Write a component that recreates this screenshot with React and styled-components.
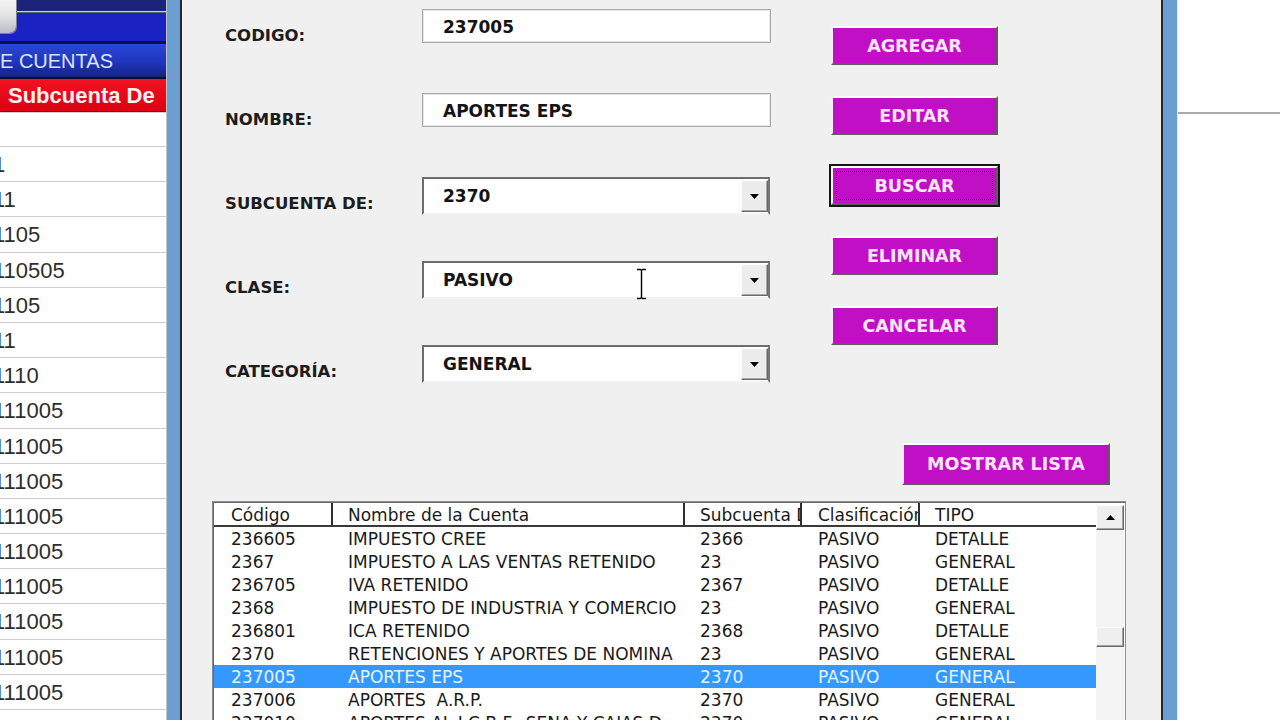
import React from "react";
import styled, { createGlobalStyle, css } from "styled-components";

const GlobalStyle = createGlobalStyle`
  html, body { margin: 0; padding: 0; background: #f0f0f0; overflow: hidden; }
  #root { width: 1280px; height: 720px; }
`;

const Screen = styled.div`
  display: flex;
  width: 1280px;
  height: 720px;
  overflow: hidden;
  font-family: "DejaVu Sans", "Liberation Sans", sans-serif;
`;

/* ---------- left (background window) ---------- */
const LeftPanel = styled.div`
  width: 166px;
  flex: none;
  display: flex;
  flex-direction: column;
  background: #fff;
  border-right: 1px solid #c4c4c4;
  overflow: hidden;
  font-family: "Liberation Sans", Arial, sans-serif;
`;

const TopBars = styled.div`
  position: relative;
  flex: none;
  display: flex;
  flex-direction: column;
`;

const Band = styled.div`
  height: ${(p) => p.$h}px;
  background: ${(p) => p.$bg};
  flex: none;
`;

const CornerKnob = styled.div`
  position: absolute;
  left: -12px;
  top: -6px;
  width: 28px;
  height: 39px;
  border-radius: 0 0 7px 0;
  background: linear-gradient(180deg, #fafafa 0%, #e4e4e4 55%, #b9bcc4 100%);
  box-shadow: 1px 1px 0 #7a7f9a;
`;

const TitleBand = styled.div`
  height: 33px;
  flex: none;
  background: linear-gradient(180deg, #2b46d8 0%, #1f35be 55%, #142381 100%);
  color: #dde4f6;
  font-size: 20px;
  line-height: 35px;
  white-space: nowrap;
`;

const RedBand = styled.div`
  height: 33px;
  flex: none;
  box-sizing: border-box;
  background: linear-gradient(180deg, #f21222 0%, #dc0010 100%);
  border-bottom: 1px solid #9a0010;
  color: #fff2f2;
  font-weight: bold;
  font-size: 22px;
  line-height: 34px;
  padding-left: 8px;
  white-space: nowrap;
`;

const LeftList = styled.div`
  display: flex;
  flex-direction: column;
`;

const LeftRow = styled.div`
  height: ${(p) => (p.$first ? 34 : 35.2)}px;
  box-sizing: border-box;
  flex: none;
  border-bottom: 1px solid #cdcdcd;
  font-size: 22px;
  line-height: 36px;
  color: #2e2e2e;
  white-space: nowrap;
  overflow: hidden;
  text-indent: -7px;
`;

/* ---------- window frame edges ---------- */
const WindowEdge = styled.div`
  flex: none;
  background: #6b9fd1;
  ${(p) =>
    p.$side === "left"
      ? css`
          width: 13px;
          border-right: 2px solid #262626;
        `
      : css`
          width: 14px;
          border-left: 2px solid #262626;
          border-right: 1px solid #e2e9f1;
        `}
`;

/* ---------- form ---------- */
const FormArea = styled.div`
  width: 979px;
  flex: none;
  display: flex;
  flex-direction: column;
  background: #f0f0f0;
  overflow: hidden;
`;

const TopSection = styled.div`
  display: flex;
  height: 429px;
  flex: none;
`;

const FieldsColumn = styled.div`
  display: flex;
  flex-direction: column;
  padding: 9px 0 0 43px;
`;

const FieldRow = styled.div`
  display: grid;
  grid-template-columns: 197px 349px;
  height: 84px;
  align-items: start;
`;

const FieldLabel = styled.div`
  margin-top: 17px;
  line-height: 20px;
  font-weight: bold;
  font-size: 16.5px;
  color: #1c1c1c;
  white-space: nowrap;
`;

const TextBox = styled.div`
  height: 34px;
  box-sizing: border-box;
  border: 1px solid #a9a9a9;
  box-shadow: inset 0 0 0 1px #e6e6e6;
  background: #fff;
  padding: 2px 0 0 20px;
  display: flex;
  align-items: center;
  font-weight: bold;
  font-size: 17px;
  color: #141414;
`;

const ComboBox = styled.div`
  position: relative;
  width: 348px;
  height: 38px;
  box-sizing: border-box;
  border: 2px solid;
  border-color: #6d6d6d #777 #f2f2f2 #6d6d6d;
  background: #fff;
  display: flex;
`;

const ComboText = styled.div`
  flex: 1;
  padding-left: 19px;
  display: flex;
  align-items: center;
  font-weight: bold;
  font-size: 17px;
  color: #141414;
`;

const DropButton = styled.div`
  width: 27px;
  margin: 1px 0;
  box-sizing: border-box;
  background: #ececec;
  border: 1px solid;
  border-color: #fff #6a6a6a #6a6a6a #fff;
  box-shadow: inset -1px -1px 0 #a8a8a8;
  display: flex;
  align-items: center;
  justify-content: center;
`;

const Cursor = styled.svg`
  position: absolute;
  left: 212px;
  top: 5px;
`;

const ButtonsColumn = styled.div`
  margin-left: 60px;
  padding-top: 26px;
  display: flex;
  flex-direction: column;
  gap: 31px;
`;

const PurpleButton = styled.button`
  position: relative;
  width: ${(p) => p.$w || 167}px;
  height: ${(p) => p.$h || 39}px;
  box-sizing: border-box;
  margin: 0;
  padding: 0;
  background: #c10fc6;
  color: #fbe6fb;
  font-family: "DejaVu Sans", sans-serif;
  font-weight: bold;
  font-size: 17.5px;
  border: 2px solid;
  border-color: #fdfdfd #5c5c5c #5c5c5c #f1f1f1;
  display: flex;
  align-items: center;
  justify-content: center;
  cursor: default;
  ${(p) =>
    p.$focused &&
    css`
      box-shadow: 0 0 0 2px #151515;
      &::after {
        content: "";
        position: absolute;
        inset: 3px;
        border: 1px dotted #2a2a2a;
      }
    `}
`;

const ActionRow = styled.div`
  display: flex;
  justify-content: flex-end;
  padding-right: 51px;
  margin-top: 14px;
  flex: none;
`;

const ListView = styled.div`
  margin: 16px 35px 0 30px;
  height: 260px;
  flex: none;
  box-sizing: border-box;
  border: 1px solid #8c8c8c;
  box-shadow: inset 1px 1px 0 #6a6a6a;
  background: #fff;
  display: flex;
  padding: 1px 1px 0 1px;
`;

const Table = styled.div`
  flex: 1;
  display: flex;
  flex-direction: column;
  overflow: hidden;
`;

const columns = "119px 352px 117px 118px 1fr";
const pads = [17, 15, 15, 16, 15];

const HeaderRow = styled.div`
  display: grid;
  grid-template-columns: ${columns};
  height: 24px;
  flex: none;
  box-sizing: border-box;
  border-bottom: 2px solid #3a3a3a;
`;

const HeaderCell = styled.div`
  padding-left: ${(p) => p.$pad}px;
  border-right: ${(p) => (p.$last ? "none" : "2px solid #2e2e2e")};
  font-size: 17px;
  line-height: 25px;
  color: #1a1a1a;
  white-space: nowrap;
  overflow: hidden;
`;

const DataRow = styled.div`
  display: grid;
  grid-template-columns: ${columns};
  height: 23px;
  flex: none;
  background: ${(p) => (p.$selected ? "#3399ff" : "transparent")};
  color: ${(p) => (p.$selected ? "#e8f3ff" : "#1a1a1a")};
`;

const DataCell = styled.div`
  min-width: 0;
  padding-left: ${(p) => p.$pad}px;
  font-size: 17px;
  line-height: 24px;
  white-space: pre;
  overflow: hidden;
  text-overflow: clip;
`;

const Scrollbar = styled.div`
  width: 28px;
  flex: none;
  margin-top: 2px;
  display: flex;
  flex-direction: column;
  background: #f4f4f4;
`;

const ScrollPart = styled.div`
  height: ${(p) => p.$h}px;
  margin-top: ${(p) => p.$mt || 0}px;
  flex: none;
  box-sizing: border-box;
  background: #efefef;
  border: 1px solid;
  border-color: #fff #696969 #696969 #fff;
  box-shadow: inset -1px -1px 0 #a3a3a3;
  display: flex;
  align-items: center;
  justify-content: center;
`;

/* ---------- right (background window) ---------- */
const RightPanel = styled.div`
  flex: 1;
  background: #fff;
  display: flex;
  flex-direction: column;
`;

const RightTop = styled.div`
  height: 112px;
  flex: none;
  border-bottom: 2px solid #a9a9a9;
`;

const DownArrow = () => (
  <svg width="9" height="5" viewBox="0 0 9 5">
    <path d="M0 0H9L4.5 5Z" fill="#000" />
  </svg>
);

const UpArrow = () => (
  <svg width="9" height="5" viewBox="0 0 9 5">
    <path d="M0 5H9L4.5 0Z" fill="#000" />
  </svg>
);

const leftRows = [
  "",
  "1",
  "11",
  "1105",
  "110505",
  "1105",
  "11",
  "1110",
  "111005",
  "111005",
  "111005",
  "111005",
  "111005",
  "111005",
  "111005",
  "111005",
  "111005",
  "111005",
];

const fields = [
  { label: "CODIGO:", value: "237005", kind: "text" },
  { label: "NOMBRE:", value: "APORTES EPS", kind: "text" },
  { label: "SUBCUENTA DE:", value: "2370", kind: "combo" },
  { label: "CLASE:", value: "PASIVO", kind: "combo", cursor: true },
  { label: "CATEGORÍA:", value: "GENERAL", kind: "combo" },
];

const buttons = ["AGREGAR", "EDITAR", "BUSCAR", "ELIMINAR", "CANCELAR"];

const headers = ["Código", "Nombre de la Cuenta", "Subcuenta De", "Clasificación", "TIPO"];

const rows = [
  ["236605", "IMPUESTO CREE", "2366", "PASIVO", "DETALLE"],
  ["2367", "IMPUESTO A LAS VENTAS RETENIDO", "23", "PASIVO", "GENERAL"],
  ["236705", "IVA RETENIDO", "2367", "PASIVO", "DETALLE"],
  ["2368", "IMPUESTO DE INDUSTRIA Y COMERCIO", "23", "PASIVO", "GENERAL"],
  ["236801", "ICA RETENIDO", "2368", "PASIVO", "DETALLE"],
  ["2370", "RETENCIONES Y APORTES DE NOMINA", "23", "PASIVO", "GENERAL"],
  ["237005", "APORTES EPS", "2370", "PASIVO", "GENERAL"],
  ["237006", "APORTES  A.R.P.", "2370", "PASIVO", "GENERAL"],
  ["237010", "APORTES AL I.C.B.F., SENA Y CAJAS D", "2370", "PASIVO", "GENERAL"],
];

export default function App() {
  return (
    <>
      <GlobalStyle />
      <Screen>
        <LeftPanel>
          <TopBars>
            <Band $h={11} $bg="#1b2478" />
            <Band $h={1} $bg="#c6d6d4" />
            <Band $h={1} $bg="#3f6e5a" />
            <Band $h={28} $bg="#1a22c2" />
            <Band $h={3} $bg="#0c1040" />
            <TitleBand>E CUENTAS</TitleBand>
            <Band $h={2} $bg="#0a0c30" />
            <RedBand>Subcuenta De</RedBand>
            <Band $h={1} $bg="#d2d2d2" />
            <CornerKnob />
          </TopBars>
          <LeftList>
            {leftRows.map((t, i) => (
              <LeftRow key={i} $first={i === 0}>
                {t}
              </LeftRow>
            ))}
          </LeftList>
        </LeftPanel>
        <WindowEdge $side="left" />

        <FormArea>
          <TopSection>
            <FieldsColumn>
              {fields.map((f) => (
                <FieldRow key={f.label}>
                  <FieldLabel>{f.label}</FieldLabel>
                  {f.kind === "text" ? (
                    <TextBox>{f.value}</TextBox>
                  ) : (
                    <ComboBox>
                      <ComboText>{f.value}</ComboText>
                      <DropButton>
                        <DownArrow />
                      </DropButton>
                      {f.cursor && (
                        <Cursor width="11" height="32" viewBox="0 0 11 32">
                          <path
                            d="M1 1.5H4.5L5.5 2.5L6.5 1.5H10M5.5 2.5V29.5M1 30.5H4.5L5.5 29.5L6.5 30.5H10"
                            stroke="#fff"
                            strokeWidth="3"
                            fill="none"
                          />
                          <path
                            d="M1 1.5H4.5L5.5 2.5L6.5 1.5H10M5.5 2.5V29.5M1 30.5H4.5L5.5 29.5L6.5 30.5H10"
                            stroke="#000"
                            strokeWidth="1.4"
                            fill="none"
                          />
                        </Cursor>
                      )}
                    </ComboBox>
                  )}
                </FieldRow>
              ))}
            </FieldsColumn>
            <ButtonsColumn>
              {buttons.map((b) => (
                <PurpleButton key={b} $focused={b === "BUSCAR"}>
                  {b}
                </PurpleButton>
              ))}
            </ButtonsColumn>
          </TopSection>

          <ActionRow>
            <PurpleButton $w={208} $h={42}>
              MOSTRAR LISTA
            </PurpleButton>
          </ActionRow>

          <ListView>
            <Table>
              <HeaderRow>
                {headers.map((h, i) => (
                  <HeaderCell key={h} $pad={pads[i]} $last={i === headers.length - 1}>
                    {h}
                  </HeaderCell>
                ))}
              </HeaderRow>
              {rows.map((r) => (
                <DataRow key={r[0]} $selected={r[0] === "237005"}>
                  {r.map((c, i) => (
                    <DataCell key={i} $pad={pads[i]}>
                      {c}
                    </DataCell>
                  ))}
                </DataRow>
              ))}
            </Table>
            <Scrollbar>
              <ScrollPart $h={25}>
                <UpArrow />
              </ScrollPart>
              <ScrollPart $h={20} $mt={97} />
            </Scrollbar>
          </ListView>
        </FormArea>

        <WindowEdge $side="right" />
        <RightPanel>
          <RightTop />
        </RightPanel>
      </Screen>
    </>
  );
}
